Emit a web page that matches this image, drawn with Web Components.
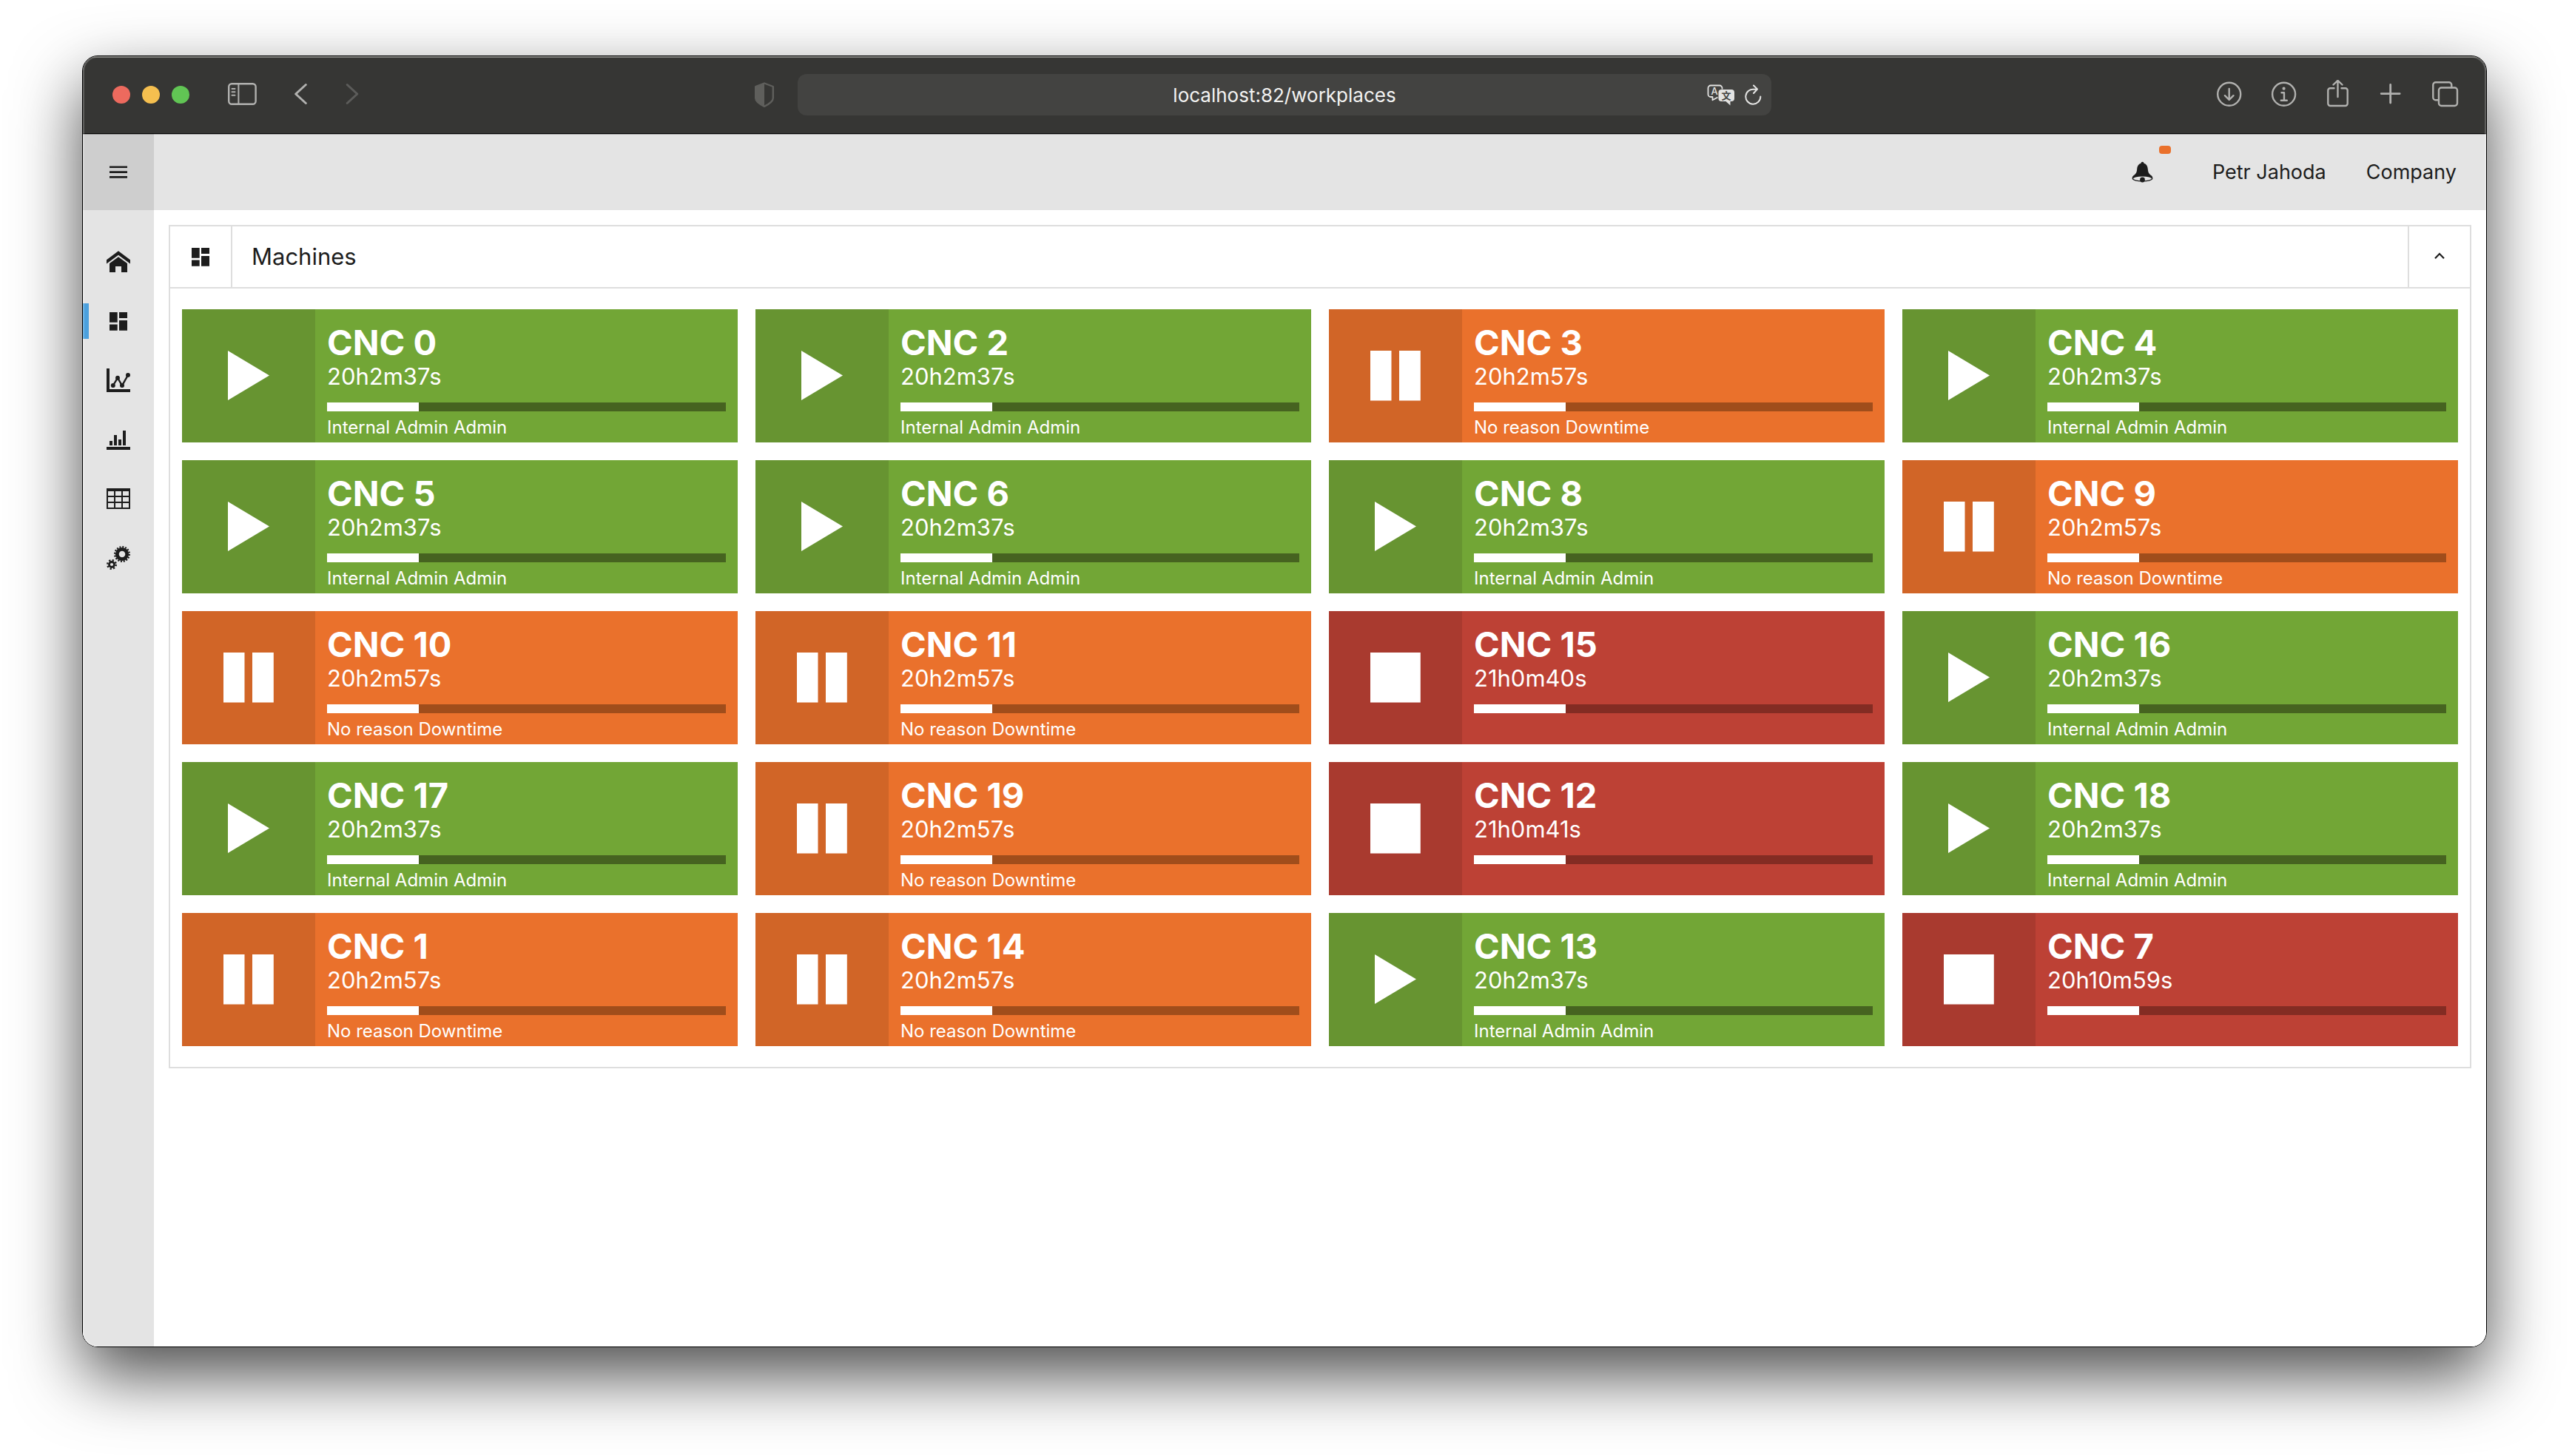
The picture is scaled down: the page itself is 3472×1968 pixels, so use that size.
<!DOCTYPE html>
<html lang="en">
<head>
<meta charset="utf-8">
<meta name="viewport" content="width=device-width, initial-scale=1">
<title>Machines</title>
<style>
  html, body { margin: 0; }
  body { background: #fff; color: #1d1d1d; font-family: Inter, "Liberation Sans", sans-serif; }
</style>
</head>
<body>
<browser-window>
  <browser-toolbar slot="toolbar" address="localhost:82/workplaces"></browser-toolbar>
  <app-shell>
    <app-topbar slot="topbar" user="Petr Jahoda" company="Company"></app-topbar>
    <app-sidebar slot="sidebar"></app-sidebar>
    <app-panel heading="Machines">
      <machine-tile name="CNC 0" state="run" duration="20h2m37s">Internal Admin Admin</machine-tile>
      <machine-tile name="CNC 2" state="run" duration="20h2m37s">Internal Admin Admin</machine-tile>
      <machine-tile name="CNC 3" state="pause" duration="20h2m57s">No reason Downtime</machine-tile>
      <machine-tile name="CNC 4" state="run" duration="20h2m37s">Internal Admin Admin</machine-tile>
      <machine-tile name="CNC 5" state="run" duration="20h2m37s">Internal Admin Admin</machine-tile>
      <machine-tile name="CNC 6" state="run" duration="20h2m37s">Internal Admin Admin</machine-tile>
      <machine-tile name="CNC 8" state="run" duration="20h2m37s">Internal Admin Admin</machine-tile>
      <machine-tile name="CNC 9" state="pause" duration="20h2m57s">No reason Downtime</machine-tile>
      <machine-tile name="CNC 10" state="pause" duration="20h2m57s">No reason Downtime</machine-tile>
      <machine-tile name="CNC 11" state="pause" duration="20h2m57s">No reason Downtime</machine-tile>
      <machine-tile name="CNC 15" state="stop" duration="21h0m40s"></machine-tile>
      <machine-tile name="CNC 16" state="run" duration="20h2m37s">Internal Admin Admin</machine-tile>
      <machine-tile name="CNC 17" state="run" duration="20h2m37s">Internal Admin Admin</machine-tile>
      <machine-tile name="CNC 19" state="pause" duration="20h2m57s">No reason Downtime</machine-tile>
      <machine-tile name="CNC 12" state="stop" duration="21h0m41s"></machine-tile>
      <machine-tile name="CNC 18" state="run" duration="20h2m37s">Internal Admin Admin</machine-tile>
      <machine-tile name="CNC 1" state="pause" duration="20h2m57s">No reason Downtime</machine-tile>
      <machine-tile name="CNC 14" state="pause" duration="20h2m57s">No reason Downtime</machine-tile>
      <machine-tile name="CNC 13" state="run" duration="20h2m37s">Internal Admin Admin</machine-tile>
      <machine-tile name="CNC 7" state="stop" duration="20h10m59s"></machine-tile>
    </app-panel>
  </app-shell>
</browser-window>

<script>
const RESET = `
  *, *::before, *::after { box-sizing: border-box; }
  button { margin: 0; padding: 0; border: 0; background: none; color: inherit; font: inherit; cursor: pointer; }
  a { color: inherit; text-decoration: none; }
  svg { display: block; flex: none; }
`;

class BaseElement extends HTMLElement {
  connectedCallback() {
    if (this.shadowRoot) return;
    this.attachShadow({ mode: 'open' }).innerHTML = `<style>${RESET}${this.styles()}</style>${this.markup()}`;
  }
  styles() { return ''; }
  markup() { return '<slot></slot>'; }
}

/* Desktop window: frame, rounded corners and drop shadow */
class BrowserWindow extends BaseElement {
  styles() { return `
    :host { display: flex; box-sizing: border-box; min-height: 100vh; padding: 75px 111px 147px; }
    .frame { position: relative; flex: 1; min-width: 0; display: flex; flex-direction: column; overflow: hidden;
      border: 1px solid #000; border-radius: 21px; background: #fff; }
    .shadow { flex: 1; min-width: 0; display: flex; border-radius: 21px; box-shadow: 0 38px 90px rgba(0,0,0,.7); }
    .frame::after { content: ""; position: absolute; inset: 0; border-radius: 20px; pointer-events: none;
      box-shadow: inset 0 0 0 2px rgba(255,255,255,.2); }
    ::slotted(app-shell) { flex: 1; }
  `; }
  markup() { return `<div class="shadow"><div class="frame"><slot name="toolbar"></slot><slot></slot></div></div>`; }
}

class BrowserToolbar extends BaseElement {
  styles() { return `
    :host { display: grid; grid-template-columns: 1fr 40.5% 1fr; align-items: center; height: 104px;
      background: #363634; color: #b1b1af; box-shadow: inset 0 2px #65645f; }
    .group { display: flex; align-items: center; }
    .lights { display: flex; gap: 16px; padding-left: 40px; margin-right: 51px; }
    .lights button { width: 24px; height: 24px; border-radius: 50%; }
    .close { background: #ed6a5e; } .min { background: #f5bf4f; } .max { background: #61c554; }
    .nav { display: flex; align-items: center; gap: 51px; }
    .forward { color: #5c5c5a; }
    .shield { margin-left: auto; margin-right: 31px; color: #5f5f5c; }
    .field { display: grid; grid-template-columns: 88px 1fr 88px; align-items: center; height: 56px;
      border-radius: 12px; background: #434341; color: #e3e3e2; }
    input { grid-column: 2; width: 100%; min-width: 0; height: 56px; padding: 0; border: 0; outline: 0; background: none;
      color: #f3f3f2; font: inherit; font-size: 26px; text-align: center; }
    .tools { display: flex; align-items: center; justify-content: flex-end; gap: 12px; padding-right: 12px; }
    .right { justify-content: flex-end; gap: 38px; padding-right: 36px; }
    .line { fill: none; stroke: currentColor; stroke-width: 2.4; stroke-linecap: round; stroke-linejoin: round; }
  `; }
  markup() { return `
    <div class="group">
      <div class="lights"><button class="close" aria-label="Close"></button><button class="min" aria-label="Minimise"></button><button class="max" aria-label="Zoom"></button></div>
      <div class="nav">
        <button aria-label="Sidebar"><svg class="line" width="40" height="34" viewBox="0 0 40 34"><rect x="2.2" y="2.2" width="36.4" height="27.6" rx="4"/><path d="M15.4 2.5v27M6.5 9h4M6.5 13.2h4M6.5 17.7h4" stroke-width="2"/></svg></button>
        <button aria-label="Back"><svg class="line" width="18" height="34" viewBox="0 0 18 34" style="stroke-width:3"><path d="M15.3 3.5 1.7 16l13.6 12.5"/></svg></button>
        <button class="forward" aria-label="Forward"><svg class="line" width="18" height="34" viewBox="0 0 18 34" style="stroke-width:3"><path d="M2.2 3.5 15.8 16 2.2 28.5"/></svg></button>
      </div>
      <button class="shield" aria-label="Privacy report"><svg width="28" height="34" viewBox="0 0 28 34"><path d="M14 1.5 25.8 6v15.5c0 4-6 8.5-11.8 11.3C8.2 30 2.2 25.5 2.2 21.5V6z" fill="none" stroke="currentColor" stroke-width="2.4" stroke-linejoin="round"/><path d="M14 1.5v31.3C8 30 2 25.5 2 21.5V6z" fill="currentColor"/></svg></button>
    </div>
    <div class="field">
      <input type="text" aria-label="Address" value="${this.getAttribute('address')}" spellcheck="false">
      <div class="tools">
        <button aria-label="Translate"><svg width="40" height="32" viewBox="0 0 40 32"><path d="M15.5 19.5 8.5 23.3V19H6a3.500 3.500 0 0 1-3.500-3.500V7A3.500 3.500 0 0 1 6 3.500h12A3.500 3.500 0 0 1 21.500 7v1.500" fill="none" stroke="currentColor" stroke-width="1.8" stroke-linejoin="round"/><path d="M20.500 9h13.500a4 4 0 0 1 4 4v8a4 4 0 0 1-4 4h-1.500v5.500L26.500 25h-6a4 4 0 0 1-4-4v-8a4 4 0 0 1 4-4z" fill="currentColor"/><g aria-hidden="true"><text x="11" y="15.500" text-anchor="middle" font-family="Inter" font-size="13" font-weight="500" fill="currentColor">A</text><text x="27" y="21.500" text-anchor="middle" font-family="Noto Sans CJK SC" font-size="13" font-weight="700" fill="#434341">文</text></g></svg></button>
        <button aria-label="Reload"><svg class="line" width="24" height="32" viewBox="0 0 24 32" style="stroke-width:2"><path d="M21.300 18.500a10 10 0 1 1-8.500-9.700h3M12 3.500l5 5-5 5.500"/></svg></button>
      </div>
    </div>
    <div class="group right">
      <button aria-label="Downloads"><svg class="line" width="36" height="40" viewBox="0 0 36 40"><circle cx="17.700" cy="19.300" r="15.500"/><path d="M17.700 12v14.500M11.900 21.200l5.800 5.800 5.800-5.800"/></svg></button>
      <button aria-label="Page info"><svg class="line" width="36" height="40" viewBox="0 0 36 40"><circle cx="17.600" cy="19.300" r="15.500"/><circle cx="17.600" cy="11.700" r="2.100" fill="currentColor" stroke="none"/><path d="M14.500 17.200h3.500v10.300M13.800 27.700h8"/></svg></button>
      <button aria-label="Share"><svg class="line" width="34" height="40" viewBox="0 0 34 40"><path d="M11.500 11.300H6.300a3 3 0 0 0-3 3V32a3 3 0 0 0 3 3h20.400a3 3 0 0 0 3-3V14.300a3 3 0 0 0-3-3h-5.200M16.500 23V1M10.500 6.500l6-5.700 6 5.700"/></svg></button>
      <button aria-label="New tab"><svg class="line" width="32" height="40" viewBox="0 0 32 40" style="stroke-width:2.800"><path d="M15.700 6.500v24.500M3.200 18.600h25"/></svg></button>
      <button aria-label="Tab overview"><svg class="line" width="39" height="40" viewBox="0 0 39 40"><rect x="11" y="10.500" width="25" height="24.500" rx="3.500"/><path d="M10.500 27.300H6.800a3.500 3.500 0 0 1-3.500-3.500V6.800a3.500 3.500 0 0 1 3.500-3.500h18a3.500 3.500 0 0 1 3.500 3.500v3.500"/></svg></button>
    </div>`; }
}

class AppShell extends BaseElement {
  styles() { return `
    :host { display: flex; flex-direction: column; background: #fff; }
    .body { flex: 1; display: flex; }
    main { flex: 1; min-width: 0; padding: 20px; }
  `; }
  markup() { return `<slot name="topbar"></slot><div class="body"><slot name="sidebar"></slot><main><slot></slot></main></div>`; }
}

class AppTopbar extends BaseElement {
  styles() { return `
    :host { display: flex; box-sizing: border-box; justify-content: space-between; height: 104px; border-top: 1px solid #000;
      background: #e4e4e4; font-size: 27px; box-shadow: inset 0 1px #a3a3a3; }
    .menu { display: grid; place-items: center; width: 96px; background: #cecece; box-shadow: inset 0 1px #939393; }
    nav { display: flex; align-items: center; gap: 54px; padding-right: 40px; }
    .bell { position: relative; display: grid; place-items: center; width: 80px; height: 72px; }
    .badge { position: absolute; top: 0; right: 2px; width: 16px; height: 11px; border-radius: 4px; background: #ea712c; }
  `; }
  markup() { return `
    <button class="menu" aria-label="Menu"><svg width="24" height="18" viewBox="0 0 24 18"><path d="M0 1.800h24M0 8.600h24M0 15.400h24" stroke="currentColor" stroke-width="2.600"/></svg></button>
    <nav>
      <button class="bell" aria-label="Notifications"><svg width="32" height="32" viewBox="0 0 32 32"><path d="M15.500 1.800c1.200 0 1.900.8 2 1.900 3.500 1 5 4 5.300 7.800.4 5 1.700 6.500 4.700 8.800 1.800 1.500 2 2.800 1.400 4.200H2.100c-.6-1.400-.4-2.700 1.400-4.200 3-2.300 4.300-3.800 4.700-8.800.3-3.800 1.800-6.800 5.300-7.800.1-1.100.8-1.900 2-1.900z" fill="#1d1d1d"/><ellipse cx="15.500" cy="24.300" rx="13.200" ry="3.600" fill="#e4e4e4" stroke="#1d1d1d" stroke-width="1.400"/><circle cx="15.500" cy="26" r="3.400" fill="#1d1d1d"/></svg><span class="badge"></span></button>
      <a href="#user">${this.getAttribute('user')}</a>
      <a href="#company">${this.getAttribute('company')}</a>
    </nav>`; }
}

const DASHBOARD = '<svg width="32" height="32" viewBox="0 0 32 32" fill="currentColor"><path d="M4 4h10.700v13.700H4zM17 4h11v8H17zM4 20.500h10.700V28.700H4zM17 15h11v13.700H17z"/></svg>';

class AppSidebar extends BaseElement {
  styles() { return `
    :host { display: block; width: 96px; background: #e4e4e4; }
    nav { display: flex; flex-direction: column; padding-top: 30px; }
    a { display: grid; grid-template-columns: 8px 1fr 8px; align-items: center; justify-items: center; height: 80px; }
    a::before { content: ""; width: 8px; height: 48px; }
    a[aria-current]::before { background: #4ba0dd; }
  `; }
  markup() { return `<nav>
    <a href="#home" aria-label="Home"><svg width="32" height="32" viewBox="0 0 32 32" fill="currentColor"><path d="M16 1.300 32 13.300v5.200L16 6.700 0 18.500v-5.200z"/><path d="M16 9.300 28 18v12h-8v-8h-8v8H4V18z"/></svg></a>
    <a href="#workplaces" aria-label="Workplaces" aria-current="page">${DASHBOARD}</a>
    <a href="#charts" aria-label="Charts"><svg width="32" height="32" viewBox="0 0 32 32" fill="currentColor"><path d="M0 0h4v28h28v4H0z"/><path d="M8.800 23 15 12.800 21 23l8-14" fill="none" stroke="currentColor" stroke-width="2.400"/><circle cx="8.800" cy="23" r="3"/><circle cx="15" cy="12.800" r="3"/><circle cx="21" cy="23" r="3"/><circle cx="29" cy="9" r="3"/></svg></a>
    <a href="#statistics" aria-label="Statistics"><svg width="32" height="32" viewBox="0 0 32 32" fill="currentColor"><path d="M0 26h32v4H0zM4 18h4v6H4zM10 10h4v14h-4zM16 16h4v8h-4zM22 4h4v20h-4z"/></svg></a>
    <a href="#data" aria-label="Data"><svg width="32" height="32" viewBox="0 0 32 32" fill="currentColor"><path fill-rule="evenodd" d="M0 2h32v28H0zM2 6v6h8V6zM12 6v6h8V6zM22 6v6h8V6zM2 14v6h8v-6zM12 14v6h8v-6zM22 14v6h8v-6zM2 22v6h8v-6zM12 22v6h8v-6zM22 22v6h8v-6z"/></svg></a>
    <a href="#settings" aria-label="Settings"><svg width="32" height="32" viewBox="0 0 32 32" fill="none" stroke="currentColor"><circle cx="21" cy="11" r="6.700" stroke-width="4.800"/><circle cx="21" cy="11" r="9.800" stroke-width="2.400" stroke-dasharray="2 1.848"/><circle cx="7" cy="25" r="3.500" stroke-width="2.800"/><circle cx="7" cy="25" r="5.800" stroke-width="2.400" stroke-dasharray="2.200 2.355"/></svg></a>
  </nav>`; }
}

class AppPanel extends BaseElement {
  styles() { return `
    :host { display: block; border: 2px solid #dedede; background: #fff; }
    header { display: grid; grid-template-columns: 84px 1fr 84px; height: 84px; border-bottom: 2px solid #dedede; }
    .icon { display: grid; place-items: center; border-right: 2px solid #dedede; }
    h2 { margin: 0; padding-left: 26px; font-size: 31px; font-weight: 400; line-height: 82px; }
    button { display: grid; place-items: center; border-left: 2px solid #dedede; }
    .grid { display: grid; grid-template-columns: repeat(4, minmax(0, 1fr)); gap: 24px; padding: 28px 16px; }
  `; }
  markup() { return `
    <header>
      <span class="icon">${DASHBOARD}</span>
      <h2>${this.getAttribute('heading')}</h2>
      <button aria-label="Collapse"><svg width="16" height="16" viewBox="0 0 16 16"><path d="M2 10.300 8 4l6 6.300" fill="none" stroke="currentColor" stroke-width="2.200"/></svg></button>
    </header>
    <div class="grid"><slot></slot></div>`; }
}

const STATE_ICONS = {
  run: '<path d="M6 0v67l56-33.500z"/>',
  pause: '<path d="M0 0h28.500v67.500H0zM39 0h28.800v67.500H39z"/>',
  stop: '<path d="M0 0h67.800v67.500H0z"/>',
};

class MachineTile extends BaseElement {
  styles() { return `
    :host { --tile: #72a636; --side: #679431; --track: #466320;
      display: grid; grid-template-columns: 180px minmax(0, 1fr); height: 180px; background: var(--tile); color: #fff; }
    :host([state="pause"]) { --tile: #ea712c; --side: #d16527; --track: #a04d1b; }
    :host([state="stop"]) { --tile: #bd4135; --side: #a93a2f; --track: #832c23; }
    .side { display: grid; place-items: center; background: var(--side); }
    .info { padding: 16px 16px 0; }
    h3 { margin: 0; font-size: 47px; font-weight: 700; line-height: 58px; }
    .time { font-size: 31px; line-height: 34px; }
    .track { height: 12px; margin: 18px 0 8px; background: var(--track); }
    .fill { width: 23%; height: 12px; background: #fff; }
    .note { font-size: 24px; line-height: 28px; white-space: nowrap; }
  `; }
  markup() { return `
    <div class="side"><svg width="68" height="68" viewBox="0 0 68 68" fill="#fff">${STATE_ICONS[this.getAttribute('state')]}</svg></div>
    <div class="info">
      <h3>${this.getAttribute('name')}</h3>
      <div class="time">${this.getAttribute('duration')}</div>
      <div class="track" role="progressbar" aria-label="Progress" aria-valuenow="23" aria-valuemin="0" aria-valuemax="100"><div class="fill"></div></div>
      <div class="note"><slot></slot></div>
    </div>`; }
}

customElements.define('browser-window', BrowserWindow);
customElements.define('browser-toolbar', BrowserToolbar);
customElements.define('app-shell', AppShell);
customElements.define('app-topbar', AppTopbar);
customElements.define('app-sidebar', AppSidebar);
customElements.define('app-panel', AppPanel);
customElements.define('machine-tile', MachineTile);
</script>
</body>
</html>
